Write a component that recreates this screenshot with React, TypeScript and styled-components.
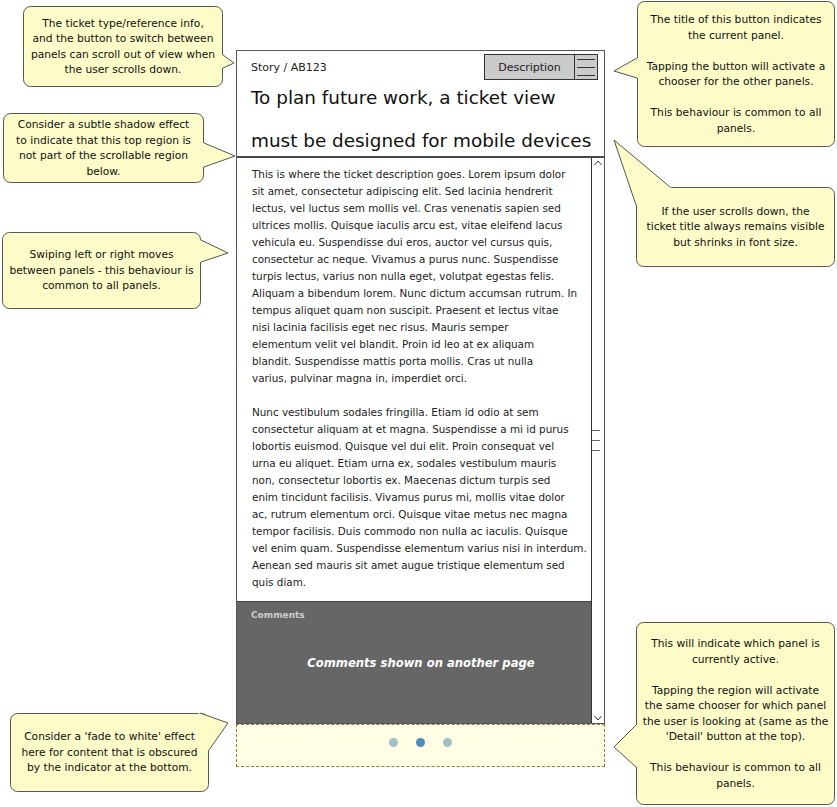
import React from "react";
import styled, { createGlobalStyle } from "styled-components";

const GlobalStyle = createGlobalStyle`
  html, body { margin: 0; padding: 0; background: #ffffff; }
  body { font-family: "DejaVu Sans", "Liberation Sans", sans-serif; color: #111; }
`;

const FONT = `"DejaVu Sans", "Liberation Sans", sans-serif`;

const Canvas = styled.div`
  position: relative;
  width: 837px;
  height: 807px;
  box-sizing: border-box;
  padding: 50px 0 0 236px;
  overflow: hidden;
  font-family: ${FONT};
`;

const PhoneColumn = styled.div`
  width: 369px;
  display: flex;
  flex-direction: column;
`;

const Frame = styled.div`
  border: 1px solid #555;
  display: flex;
  flex-direction: column;
  background: #fff;
`;

const Header = styled.header`
  height: 107px;
  box-sizing: border-box;
  border-bottom: 2px solid #4a4a4a;
  padding: 3px 6px 0 14px;
  display: flex;
  flex-direction: column;
`;

const TopRow = styled.div`
  display: flex;
  align-items: center;
  justify-content: space-between;
  height: 26px;
`;

const TicketRef = styled.span`
  font-size: 11px;
  color: #222;
`;

const ButtonGroup = styled.div`
  display: flex;
  height: 26px;
`;

const PanelButton = styled.div`
  width: 91px;
  box-sizing: border-box;
  border: 1px solid #333;
  background: #cbcbcb;
  display: flex;
  align-items: center;
  justify-content: center;
  font-size: 11px;
  color: #222;
`;

const MenuButton = styled.div`
  width: 23px;
  box-sizing: border-box;
  border: 1px solid #333;
  border-left: none;
  background: #cbcbcb;
  display: flex;
  flex-direction: column;
  align-items: center;
  justify-content: center;
  gap: 7px;
`;

const MenuBar = styled.span`
  display: block;
  width: 18px;
  height: 1px;
  background: #333;
`;

const Title = styled.h1`
  margin: -4px 0 0 0;
  font-size: 18.4px;
  font-weight: normal;
  line-height: 43px;
  color: #111;
  white-space: nowrap;
`;

const TitleLine = styled.div`
  height: 43px;
`;

const Body = styled.div`
  height: 565px;
  display: flex;
`;

const ScrollContent = styled.div`
  width: 354px;
  display: flex;
  flex-direction: column;
`;

const Description = styled.div`
  padding: 8px 0 10px 15px;
  font-size: 10.4px;
  line-height: 17px;
  color: #222;
  white-space: nowrap;
  overflow: hidden;
`;

const Paragraph = styled.p`
  margin: 0 0 17px 0;
  &:last-child { margin-bottom: 0; }
`;

const TextLine = styled.span`
  display: block;
`;

const Comments = styled.section`
  flex: 1;
  background: #666;
  border-top: 1px solid #444;
  padding: 7px 0 0 14px;
  display: flex;
  flex-direction: column;
`;

const CommentsLabel = styled.div`
  font-size: 9px;
  font-weight: bold;
  line-height: 12px;
  color: #cfcfcf;
`;

const CommentsMessage = styled.div`
  margin-top: 34px;
  text-align: center;
  font-size: 11.6px;
  font-weight: bold;
  font-style: italic;
  line-height: 16px;
  color: #fff;
`;

const Scrollbar = styled.div`
  width: 13px;
  box-sizing: border-box;
  border-left: 1px solid #333;
  display: flex;
  flex-direction: column;
  justify-content: space-between;
  align-items: center;
  padding: 2px 0;
`;

const Grip = styled.div`
  align-self: flex-start;
  display: flex;
  flex-direction: column;
  gap: 9px;
`;

const GripLine = styled.span`
  display: block;
  width: 8px;
  height: 1px;
  background: #666;
`;

const Indicator = styled.div`
  height: 43px;
  box-sizing: border-box;
  border: 1px dashed #9a7a30;
  background: #fffde4;
  display: flex;
  justify-content: center;
  align-items: flex-start;
  padding-top: 13px;
  gap: 18px;
`;

const Dot = styled.span<{ $active?: boolean }>`
  width: 9px;
  height: 9px;
  border-radius: 50%;
  background: ${(p) => (p.$active ? "#4b8ec0" : "#a2bfc8")};
`;

const CalloutBox = styled.div`
  position: absolute;
  box-sizing: border-box;
  display: flex;
  flex-direction: column;
  justify-content: center;
  align-items: center;
`;

const CalloutShape = styled.svg`
  position: absolute;
  left: 0;
  top: 0;
  overflow: visible;
  z-index: 0;
`;

const CalloutText = styled.div`
  position: relative;
  z-index: 1;
  text-align: center;
  font-size: 10.7px;
  line-height: 15.5px;
  color: #111;
  white-space: nowrap;
`;

const EmptyLine = styled.span`
  display: block;
  height: 15.5px;
`;

type Pt = [number, number];

interface CalloutData {
  x: number;
  y: number;
  w: number;
  h: number;
  tail: [Pt, Pt, Pt];
  lines: string[];
}

const FILL = "#fdfcc8";
const STROKE = "#555";

function Callout({ x, y, w, h, tail, lines }: CalloutData) {
  const loc = tail.map(([px, py]) => [px - x, py - y] as Pt);
  const c: Pt = [w / 2, h / 2];
  const wedge = [loc[0], loc[1], loc[2], c].map((p) => p.join(",")).join(" ");
  const edge = loc.map((p) => p.join(",")).join(" ");
  return (
    <CalloutBox style={{ left: x, top: y, width: w, height: h }}>
      <CalloutShape width={w} height={h}>
        <rect x={0.5} y={0.5} width={w - 1} height={h - 1} rx={7} fill={FILL} stroke={STROKE} strokeWidth={1} />
        <polygon points={wedge} fill={FILL} />
        <polyline points={edge} fill="none" stroke={STROKE} strokeWidth={1} />
      </CalloutShape>
      <CalloutText>
        {lines.map((l, i) => (l === "" ? <EmptyLine key={i} /> : <TextLine key={i}>{l}</TextLine>))}
      </CalloutText>
    </CalloutBox>
  );
}

const callouts: CalloutData[] = [
  {
    x: 23, y: 6, w: 200, h: 81,
    tail: [[223, 55], [234, 63], [223, 68]],
    lines: [
      "The ticket type/reference info,",
      "and the button to switch between",
      "panels can scroll out of view when",
      "the user scrolls down.",
    ],
  },
  {
    x: 3, y: 113, w: 201, h: 70,
    tail: [[204, 143], [235, 156], [204, 167]],
    lines: [
      "Consider a subtle shadow effect",
      "to indicate that this top region is",
      "not part of the scrollable region",
      "below.",
    ],
  },
  {
    x: 2, y: 232, w: 199, h: 77,
    tail: [[201, 240], [228, 253], [201, 262]],
    lines: [
      "Swiping left or right moves",
      "between panels - this behaviour is",
      "common to all panels.",
    ],
  },
  {
    x: 10, y: 713, w: 199, h: 79,
    tail: [[200, 713], [228, 723], [209, 750]],
    lines: [
      "Consider a 'fade to white' effect",
      "here for content that is obscured",
      "by the indicator at the bottom.",
    ],
  },
  {
    x: 637, y: 1, w: 198, h: 146,
    tail: [[637, 58], [614, 71], [637, 78]],
    lines: [
      "The title of this button indicates",
      "the current panel.",
      "",
      "Tapping the button will activate a",
      "chooser for the other panels.",
      "",
      "This behaviour is common to all",
      "panels.",
    ],
  },
  {
    x: 636, y: 187, w: 199, h: 80,
    tail: [[670, 187], [614, 140], [636, 205]],
    lines: [
      "If the user scrolls down, the",
      "ticket title always remains visible",
      "but shrinks in font size.",
    ],
  },
  {
    x: 636, y: 622, w: 199, h: 183,
    tail: [[636, 725], [614, 747], [636, 767]],
    lines: [
      "This will indicate which panel is",
      "currently active.",
      "",
      "Tapping the region will activate",
      "the same chooser for which panel",
      "the user is looking at (same as the",
      "'Detail' button at the top).",
      "",
      "This behaviour is common to all",
      "panels.",
    ],
  },
];

const paragraphs: string[][] = [
  [
    "This is where the ticket description goes. Lorem ipsum dolor",
    "sit amet, consectetur adipiscing elit. Sed lacinia hendrerit",
    "lectus, vel luctus sem mollis vel. Cras venenatis sapien sed",
    "ultrices mollis. Quisque iaculis arcu est, vitae eleifend lacus",
    "vehicula eu. Suspendisse dui eros, auctor vel cursus quis,",
    "consectetur ac neque. Vivamus a purus nunc. Suspendisse",
    "turpis lectus, varius non nulla eget, volutpat egestas felis.",
    "Aliquam a bibendum lorem. Nunc dictum accumsan rutrum. In",
    "tempus aliquet quam non suscipit. Praesent et lectus vitae",
    "nisi lacinia facilisis eget nec risus. Mauris semper",
    "elementum velit vel blandit. Proin id leo at ex aliquam",
    "blandit. Suspendisse mattis porta mollis. Cras ut nulla",
    "varius, pulvinar magna in, imperdiet orci.",
  ],
  [
    "Nunc vestibulum sodales fringilla. Etiam id odio at sem",
    "consectetur aliquam at et magna. Suspendisse a mi id purus",
    "lobortis euismod. Quisque vel dui elit. Proin consequat vel",
    "urna eu aliquet. Etiam urna ex, sodales vestibulum mauris",
    "non, consectetur lobortis ex. Maecenas dictum turpis sed",
    "enim tincidunt facilisis. Vivamus purus mi, mollis vitae dolor",
    "ac, rutrum elementum orci. Quisque vitae metus nec magna",
    "tempor facilisis. Duis commodo non nulla ac iaculis. Quisque",
    "vel enim quam. Suspendisse elementum varius nisi in interdum.",
    "Aenean sed mauris sit amet augue tristique elementum sed",
    "quis diam.",
  ],
];

const Chevron = ({ up }: { up?: boolean }) => (
  <svg width="8" height="6" viewBox="0 0 8 6">
    <polyline
      points={up ? "0.5,5 4,1 7.5,5" : "0.5,1 4,5 7.5,1"}
      fill="none"
      stroke="#333"
      strokeWidth="1"
    />
  </svg>
);

export default function App() {
  return (
    <>
      <GlobalStyle />
      <Canvas>
        <PhoneColumn>
          <Frame>
            <Header>
              <TopRow>
                <TicketRef>Story / AB123</TicketRef>
                <ButtonGroup>
                  <PanelButton>Description</PanelButton>
                  <MenuButton>
                    <MenuBar />
                    <MenuBar />
                    <MenuBar />
                  </MenuButton>
                </ButtonGroup>
              </TopRow>
              <Title>
                <TitleLine>To plan future work, a ticket view</TitleLine>
                <TitleLine>must be designed for mobile devices</TitleLine>
              </Title>
            </Header>
            <Body>
              <ScrollContent>
                <Description>
                  {paragraphs.map((p, i) => (
                    <Paragraph key={i}>
                      {p.map((l, j) => (
                        <TextLine key={j}>{l}</TextLine>
                      ))}
                    </Paragraph>
                  ))}
                </Description>
                <Comments>
                  <CommentsLabel>Comments</CommentsLabel>
                  <CommentsMessage>Comments shown on another page</CommentsMessage>
                </Comments>
              </ScrollContent>
              <Scrollbar>
                <Chevron up />
                <Grip>
                  <GripLine />
                  <GripLine />
                  <GripLine />
                </Grip>
                <Chevron />
              </Scrollbar>
            </Body>
          </Frame>
          <Indicator>
            <Dot />
            <Dot $active />
            <Dot />
          </Indicator>
        </PhoneColumn>
        {callouts.map((c, i) => (
          <Callout key={i} {...c} />
        ))}
      </Canvas>
    </>
  );
}
